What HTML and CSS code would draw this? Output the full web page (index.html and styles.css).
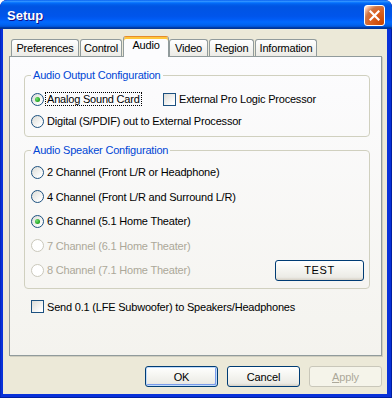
FILE: index.html
```html
<!DOCTYPE html>
<html>
<head>
<meta charset="utf-8">
<title>Setup</title>
<link rel="stylesheet" href="styles.css">
</head>
<body>
<div class="window">
  <div class="titlebar">
    <span class="title">Setup</span>
    <button class="close" aria-label="Close">
      <svg width="11" height="11" viewBox="0 0 11 11"><path d="M1.5 1.5 L9.5 9.5 M9.5 1.5 L1.5 9.5" stroke="#fff" stroke-width="2.2" stroke-linecap="square"/></svg>
    </button>
  </div>
  <div class="client">
    <div class="tabs">
      <div class="tab t-pref">Preferences</div>
      <div class="tab t-ctrl">Control</div>
      <div class="tab t-audio active">Audio</div>
      <div class="tab t-video">Video</div>
      <div class="tab t-region">Region</div>
      <div class="tab t-info">Information</div>
    </div>
    <div class="panel">
      <fieldset class="group g-output">
        <legend>Audio Output Configuration</legend>
        <div class="row r-out">
          <div class="opt opt-analog"><span class="radio checked"></span><span class="lbl focused">Analog Sound Card</span></div>
          <div class="opt"><span class="check"></span><span class="lbl">External Pro Logic Processor</span></div>
        </div>
        <div class="row r-out">
          <div class="opt"><span class="radio"></span><span class="lbl">Digital (S/PDIF) out to External Processor</span></div>
        </div>
      </fieldset>
      <fieldset class="group g-speaker">
        <legend>Audio Speaker Configuration</legend>
        <div class="row r-spk">
          <div class="opt"><span class="radio"></span><span class="lbl">2 Channel (Front L/R or Headphone)</span></div>
        </div>
        <div class="row r-spk">
          <div class="opt"><span class="radio"></span><span class="lbl">4 Channel (Front L/R and Surround L/R)</span></div>
        </div>
        <div class="row r-spk">
          <div class="opt"><span class="radio checked"></span><span class="lbl">6 Channel (5.1 Home Theater)</span></div>
        </div>
        <div class="row r-spk">
          <div class="opt disabled"><span class="radio"></span><span class="lbl">7 Channel (6.1 Home Theater)</span></div>
        </div>
        <div class="row r-spk r-last">
          <div class="opt disabled"><span class="radio"></span><span class="lbl">8 Channel (7.1 Home Theater)</span></div>
          <button class="btn btn-test">TEST</button>
        </div>
      </fieldset>
      <div class="row r-send">
        <div class="opt"><span class="check"></span><span class="lbl">Send 0.1 (LFE Subwoofer) to Speakers/Headphones</span></div>
      </div>
    </div>
    <div class="buttons">
      <button class="btn btn-default">OK</button>
      <button class="btn">Cancel</button>
      <button class="btn btn-disabled"><u>A</u>pply</button>
    </div>
  </div>
</div>
</body>
</html>
```
FILE: styles.css
```css
* { box-sizing: border-box; }
html, body { margin: 0; padding: 0; background: #ffffff; }
body { font-family: "Liberation Sans", Arial, sans-serif; font-size: 11px; letter-spacing: -0.2px; color: #000; }

.window {
  width: 392px;
  height: 398px;
  display: flex;
  flex-direction: column;
  background: #0831D9;
  border-radius: 7px 7px 0 0;
  padding: 0 5px 4px 3px;
  box-shadow: inset -1px -1px 0 #001EA0, inset 1px 0 0 #0427C0;
  overflow: hidden;
}

.titlebar {
  height: 29px;
  margin: 0 -5px 0 -3px;
  padding: 0 7px 0 7px;
  display: flex;
  align-items: center;
  justify-content: space-between;
  border-radius: 7px 7px 0 0;
  background: linear-gradient(180deg, #0058EE 0%, #3593FF 4%, #288EFF 6%, #127DFF 8%, #036FFC 10%, #0262EE 14%, #0057E5 20%, #0054E3 24%, #0055EB 56%, #005BF5 66%, #026AFE 76%, #0062EF 86%, #0052D6 92%, #0040AB 94%, #003092 100%);
}
.title {
  font-family: "Liberation Sans", Arial, sans-serif;
  font-weight: bold;
  font-size: 13px;
  letter-spacing: 0;
  color: #fff;
  text-shadow: 1px 1px 0 #0F1089;
  padding-top: 1px;
}
.close {
  width: 21px;
  height: 21px;
  margin-top: 2px;
  padding: 0;
  border: 1px solid #fff;
  border-radius: 3px;
  display: grid;
  place-items: center;
  background: radial-gradient(circle at 90% 90%, #CC4600 0%, #DC6527 55%, #CD7546 70%, #FFCCB2 90%, #ffffff 100%);
}
.close svg { display: block; }

.client {
  flex: 1;
  background: #ECE9D8;
  padding: 7px 5px 7px 6px;
  display: flex;
  flex-direction: column;
}

.tabs {
  display: flex;
  align-items: flex-end;
  height: 20px;
  padding-left: 2px;
}
.tab {
  height: 17px;
  padding: 0 4px;
  margin-right: 1px;
  border: 1px solid #919B9C;
  border-bottom: none;
  border-radius: 3px 3px 0 0;
  background: linear-gradient(180deg, #FFFFFF 0%, #F7F7F5 40%, #ECEBE6 100%);
  display: flex;
  align-items: center;
  justify-content: center;
  line-height: 13px;
  white-space: nowrap;
}
.t-pref { width: 68px; }
.t-ctrl { width: 42px; }
.t-video { width: 39px; }
.t-region { width: 45px; }
.t-info { width: 62px; }
.tab.active {
  width: 46px;
  height: 21px;
  margin: 0 0 -1px 0;
  padding-bottom: 3px;
  background: #FCFCFE;
  border-color: #919B9C;
  border-top: 1px solid #E68B2C;
  box-shadow: inset 0 2px 0 #FFC73C;
  position: relative;
  z-index: 1;
}

.panel {
  height: 300px;
  border: 1px solid #919B9C;
  background: linear-gradient(180deg, #FCFCFE 0%, #F4F3EE 100%);
  box-shadow: 1px 1px 0 #D0CEBF;
  padding: 12px 11px 0 14px;
}

.group {
  margin: 0;
  min-inline-size: 0;
  border: 1px solid #D0D0BF;
  border-radius: 4px;
  padding: 6px 6px 4px 6px;
}
.group legend {
  color: #0046D5;
  padding: 0 2px;
  line-height: 13px;
}
.g-speaker { margin-top: 7px; padding-top: 3px; padding-bottom: 5px; }

.row { display: flex; align-items: center; }
.r-out { height: 22px; }
.r-spk { height: 24.5px; }
.r-last { justify-content: space-between; }
.r-send { height: 16px; margin: 10px 0 0 7px; }

.opt { display: flex; align-items: center; white-space: nowrap; }
.opt-analog { width: 132px; }
.lbl {
  padding: 0 1px;
  border: 1px dotted transparent;
  line-height: 12px;
}
.lbl.focused { border-color: #000; }
.opt.disabled .lbl { color: #ACA899; }

.radio {
  width: 13px;
  height: 13px;
  margin-right: 1px;
  border-radius: 50%;
  border: 1px solid #1C5180;
  background: linear-gradient(135deg, #DCDCD7 0%, #FFFFFF 85%);
  display: grid;
  place-items: center;
  flex: none;
}
.radio.checked::after {
  content: "";
  width: 5px;
  height: 5px;
  border-radius: 50%;
  background: radial-gradient(circle at 35% 35%, #72E272 0%, #21A121 70%, #1C8A1C 100%);
}
.opt.disabled .radio {
  border-color: #CAC8BB;
  background: #FFFFFF;
}
.check {
  width: 13px;
  height: 13px;
  margin-right: 1px;
  border: 1px solid #1C5180;
  background: linear-gradient(135deg, #DCDCD7 0%, #FFFFFF 85%);
  flex: none;
}

.btn {
  height: 21px;
  width: 73px;
  padding: 0;
  font-family: "Liberation Sans", Arial, sans-serif;
  font-size: 11px;
  letter-spacing: -0.1px;
  color: #000;
  border: 1px solid #003C74;
  border-radius: 3px;
  background: linear-gradient(180deg, #FFFFFF 0%, #F6F6F2 40%, #ECEBE6 85%, #D6D0C5 100%);
}
.btn-test { width: 89px; margin-right: -1px; letter-spacing: 0.6px; }
.btn-default {
  box-shadow: inset 0 0 0 1px #C0DBFB, inset -1px -1px 0 1px #7A9BEA;
}
.btn-disabled {
  color: #ACA899;
  border-color: #C9C7BA;
  background: #F5F4EA;
}
.btn u { text-decoration: underline; }

.buttons {
  margin-top: 10px;
  display: flex;
  justify-content: flex-end;
  gap: 9px;
}
```
